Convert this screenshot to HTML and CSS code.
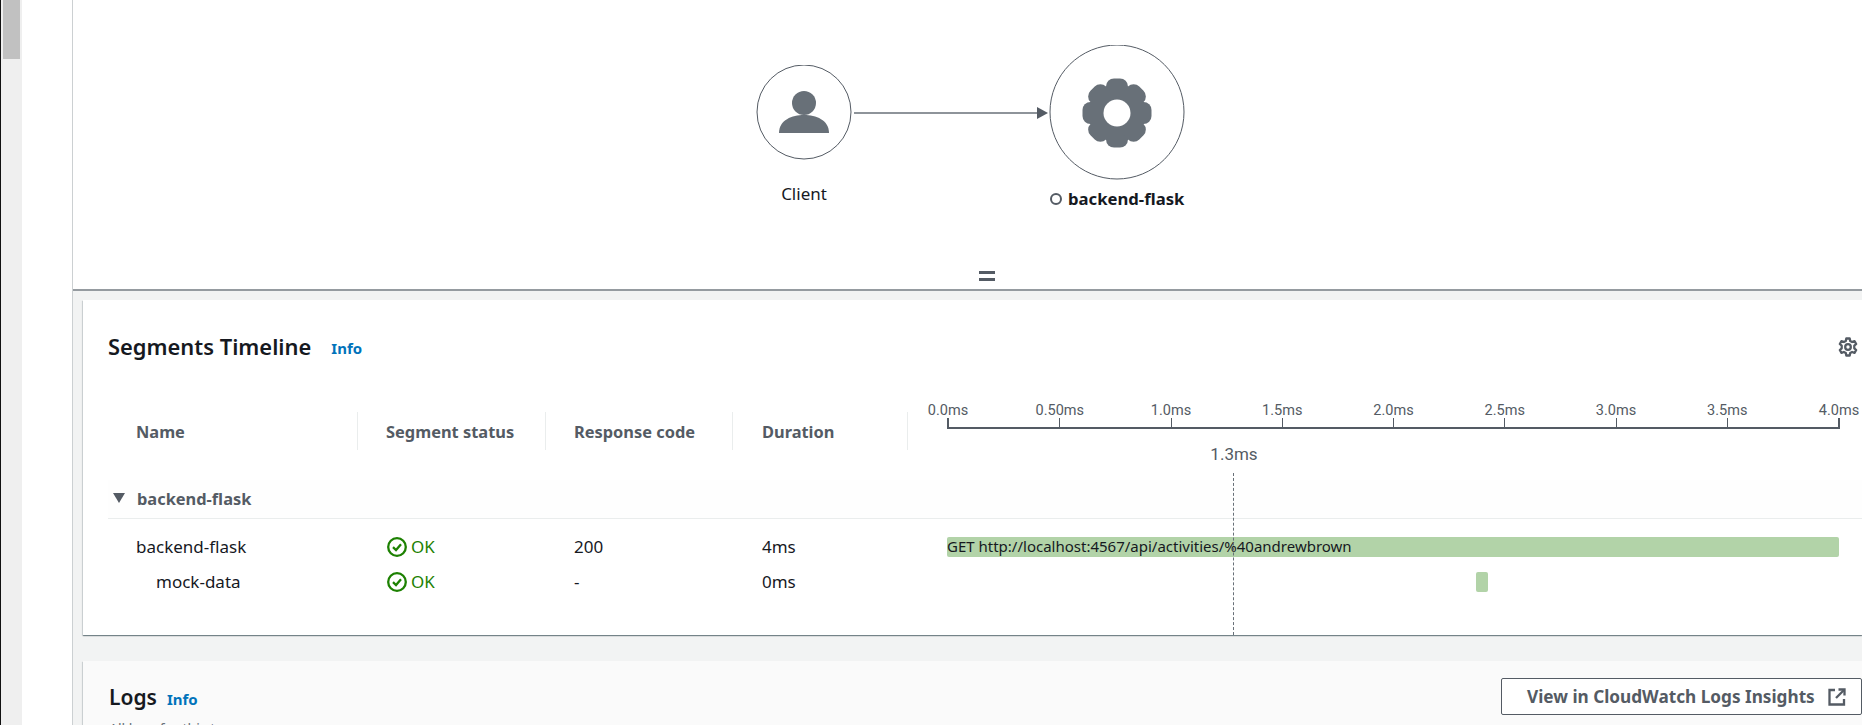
FILE: index.html
```html
<!DOCTYPE html>
<html lang="en">
<head>
<meta charset="utf-8">
<title>Trace details</title>
<link rel="stylesheet" href="styles.css">
</head>
<body>
<div class="page">
  <div class="scrollbar"><div class="thumb"></div></div>
  <div class="gutter"></div>
  <main class="main">
    <section class="map">
      <div class="node client-node"><svg width="96" height="96" viewBox="0 0 96 96"><circle cx="48" cy="47" r="47" fill="#fff" stroke="#545b64" stroke-width="1"/><circle cx="48" cy="38" r="12" fill="#687078"/><path d="M23 68C23 55 36 50 48 50C60 50 73 55 73 68Z" fill="#687078"/></svg></div>
      <svg class="edge" width="194" height="14" viewBox="0 0 194 14"><path d="M0 7H184" stroke="#687078" stroke-width="1.4"/><path d="M183 1L194 7L183 13Z" fill="#545b64"/></svg>
      <div class="node service-node"><svg width="136" height="136" viewBox="0 0 136 136"><circle cx="68" cy="67" r="67" fill="#fff" stroke="#545b64" stroke-width="1"/><g fill="#687078"><circle cx="68" cy="68" r="28"/><rect x="57" y="33.500" width="22" height="69" rx="8"/><rect x="57" y="33.500" width="22" height="69" rx="8" transform="rotate(45 68 68)"/><rect x="57" y="33.500" width="22" height="69" rx="8" transform="rotate(90 68 68)"/><rect x="57" y="33.500" width="22" height="69" rx="8" transform="rotate(135 68 68)"/></g><circle cx="68" cy="68" r="13.500" fill="#fff"/></svg></div>
      <div class="label client-label">Client</div>
      <div class="label service-label"><span class="ring"></span>backend-flask</div>
      <div class="handle"></div>
    </section>
    <div class="panels">
      <section class="card timeline-card">
        <header class="card-head">
          <h2 class="title">Segments Timeline</h2>
          <a class="info info-wide">Info</a>
          <svg class="settings" width="20" height="20" viewBox="0 0 20 20"><g fill="none" stroke="#545b64" stroke-width="2.300" stroke-linejoin="round"><path d="M8.300 1.500H11.700L12.200 4L14.100 5L16.500 4.100L18.200 7L16.300 8.700V11.300L18.200 13L16.500 15.900L14.100 15L12.200 16L11.700 18.500H8.300L7.800 16L5.900 15L3.500 15.900L1.800 13L3.700 11.300V8.700L1.800 7L3.500 4.100L5.900 5L7.800 4Z"/><circle cx="10" cy="10" r="2.800"/></g></svg>
        </header>
        <div class="table">
          <div class="thead">
            <div class="th name-col">Name</div>
            <div class="th status-col">Segment status</div>
            <div class="th code-col">Response code</div>
            <div class="th dur-col">Duration</div>
            <div class="ruler">
              <div class="tick first"><span>0.0ms</span></div>
              <div class="tick"><span>0.50ms</span></div>
              <div class="tick"><span>1.0ms</span></div>
              <div class="tick"><span>1.5ms</span></div>
              <div class="tick"><span>2.0ms</span></div>
              <div class="tick"><span>2.5ms</span></div>
              <div class="tick"><span>3.0ms</span></div>
              <div class="tick"><span>3.5ms</span></div>
              <div class="tick last"><span>4.0ms</span></div>
            </div>
          </div>
          <div class="group"><span class="caret"></span>backend-flask</div>
          <div class="row">
            <div class="name-col cell">backend-flask</div>
            <div class="status-col cell ok"><svg width="20" height="20" viewBox="0 0 20 20"><circle cx="10" cy="10" r="8.800" fill="none" stroke="#1d8102" stroke-width="2.300"/><path d="M6 10.200L9 13L14 7.300" fill="none" stroke="#1d8102" stroke-width="2.300"/></svg>OK</div>
            <div class="code-col cell">200</div>
            <div class="dur-col cell">4ms</div>
            <div class="track"><div class="bar" style="margin-left:0;width:892px">GET http://localhost:4567/api/activities/%40andrewbrown</div></div>
          </div>
          <div class="row">
            <div class="name-col cell child">mock-data</div>
            <div class="status-col cell ok"><svg width="20" height="20" viewBox="0 0 20 20"><circle cx="10" cy="10" r="8.800" fill="none" stroke="#1d8102" stroke-width="2.300"/><path d="M6 10.200L9 13L14 7.300" fill="none" stroke="#1d8102" stroke-width="2.300"/></svg>OK</div>
            <div class="code-col cell">-</div>
            <div class="dur-col cell">0ms</div>
            <div class="track"><div class="bar" style="margin-left:529px;width:12px"></div></div>
          </div>
        </div>
        <div class="cursor"><span class="cursor-label">1.3ms</span></div>
      </section>
      <section class="card logs-card">
        <div class="logs-head">
          <div>
            <div class="logs-title"><h2 class="title">Logs</h2><a class="info">Info</a></div>
            <p class="desc">All logs for this trace.</p>
          </div>
          <button class="btn">View in CloudWatch Logs Insights<svg width="18" height="18" viewBox="0 0 18 18"><g fill="none" stroke="#545b64" stroke-width="2.300"><path d="M7 2H1.500V16.500H16V11"/><path d="M10.500 1.500H16.500V7.500"/><path d="M16 2L8 10"/></g></svg></button>
        </div>
      </section>
    </div>
  </main>
</div>
</body>
</html>
```
FILE: styles.css
```css
* { box-sizing: border-box; }
html, body { margin: 0; height: 100%; overflow: hidden; }
body { background: #fff; font-family: "Noto Sans", "Open Sans", sans-serif; font-size: 17px; color: #16191f; }
.page { display: flex; width: 1862px; height: 725px; overflow: hidden; }
.scrollbar { width: 22px; flex: none; background: #efefef; border-left: 1px solid #111; padding-left: 2px; }
.thumb { width: 17px; height: 59px; background: #c1c1c1; }
.gutter { width: 50px; flex: none; background: #fff; }
.main { flex: 1; min-width: 0; border-left: 1px solid #ccd0d2; background: #f2f3f3; }

.map { position: relative; height: 291px; background: #fff; border-bottom: 2px solid #959ba0; }
.node { position: absolute; line-height: 0; }
.client-node { left: 683px; top: 65px; }
.service-node { left: 976px; top: 45px; }
.edge { position: absolute; left: 781px; top: 106px; }
.label { position: absolute; line-height: 22px; white-space: nowrap; }
.client-label { left: 701px; width: 60px; top: 183px; text-align: center; }
.service-label { left: 977px; top: 188px; font-size: 16.700px; font-weight: 700; display: flex; align-items: center; }
.ring { width: 12px; height: 12px; border: 2px solid #545b64; border-radius: 50%; margin-right: 6px; }
.handle { position: absolute; left: 906px; top: 271px; width: 16px; height: 10px; border-top: 3px solid #545b64; border-bottom: 3px solid #545b64; }

.panels { padding: 9px 0 0 10px; display: flex; flex-direction: column; gap: 26px; }
.card { background: #fff; box-shadow: 0 1px 1px 0 rgba(0,28,36,.4), 1px 1px 1px 0 rgba(0,28,36,.1), -1px 1px 1px 0 rgba(0,28,36,.1); }
.timeline-card { position: relative; height: 335px; padding-left: 25px; }
.card-head { display: flex; align-items: center; height: 94px; }
.title { margin: 0; font-size: 21.900px; font-weight: 600; line-height: 26px; }
.info { color: #0073bb; font-size: 15px; font-weight: 700; line-height: 20px; }
.info-wide { margin-left: 20px; margin-top: 2px; }
.settings { margin-left: auto; margin-right: 4px; }

.table { display: flex; flex-direction: column; }
.thead { display: flex; height: 56px; align-items: flex-end; }
.name-col { width: 250px; flex: none; padding-left: 28px; }
.status-col { width: 188px; flex: none; padding-left: 28px; }
.code-col { width: 187px; flex: none; padding-left: 28px; }
.dur-col { width: 175px; flex: none; padding-left: 29px; }
.th { height: 38px; display: flex; align-items: center; padding-top: 1px; font-size: 16.400px; font-weight: 700; color: #545b64; border-right: 1px solid #eaeded; }
.ruler { display: flex; justify-content: space-between; align-items: flex-end; width: 893px; margin-left: 39px; height: 11px; margin-bottom: 21px; border-bottom: 2px solid #545b64; }
.tick { position: relative; width: 1px; height: 9px; background: #545b64; font-family: "Roboto", sans-serif; }
.tick.first, .tick.last { width: 2px; }
.tick span { position: absolute; left: 50%; bottom: 7px; transform: translateX(-50%); font-size: 14.500px; line-height: 18px; color: #545b64; white-space: nowrap; }

.group { height: 39px; margin-top: 30px; margin-bottom: 10px; padding-bottom: 2px; background: #fefefe; border-bottom: 1px solid #eaeded; padding-left: 5px; display: flex; align-items: center; font-size: 16.400px; font-weight: 700; color: #545b64; }
.caret { width: 0; height: 0; border-left: 6.500px solid transparent; border-right: 6.500px solid transparent; border-top: 10px solid #545b64; margin-right: 12px; }
.row { display: flex; align-items: center; height: 35px; }
.cell { line-height: 22px; }
.child { padding-left: 48px; }
.ok { display: flex; align-items: center; gap: 4px; color: #1d8102; padding-left: 29px; }
.track { width: 893px; margin-left: 39px; flex: none; }
.bar { height: 20px; background: #b2d3a8; border-radius: 2px; font-family: "Noto Sans", sans-serif; font-size: 15px; line-height: 19px; color: #16191f; white-space: nowrap; }

.cursor { position: absolute; left: 1150px; top: 173px; bottom: 0; border-left: 1px dashed #687078; }
.cursor-label { position: absolute; left: 0; top: -30px; transform: translateX(-50%); font-family: "Roboto", sans-serif; font-size: 17px; line-height: 22px; color: #545b64; white-space: nowrap; }

.logs-card { background: #fafafa; height: 120px; padding: 0 0 0 26px; }
.logs-head { display: flex; justify-content: space-between; align-items: flex-start; padding-top: 17px; }
.logs-title { display: flex; align-items: center; gap: 10px; height: 38px; }
.logs-title .info { margin-top: 3px; }
.logs-title .title { font-size: 21px; }
.desc { margin: 3px 0 0; font-size: 14px; line-height: 20px; color: #687078; }
.btn { width: 361px; height: 37px; flex: none; display: flex; align-items: center; gap: 13px; padding: 0 0 0 25px; background: #fff; border: 1px solid #545b64; border-radius: 2px; font: 700 17.200px "Noto Sans", "Open Sans", sans-serif; color: #545b64; }
```
